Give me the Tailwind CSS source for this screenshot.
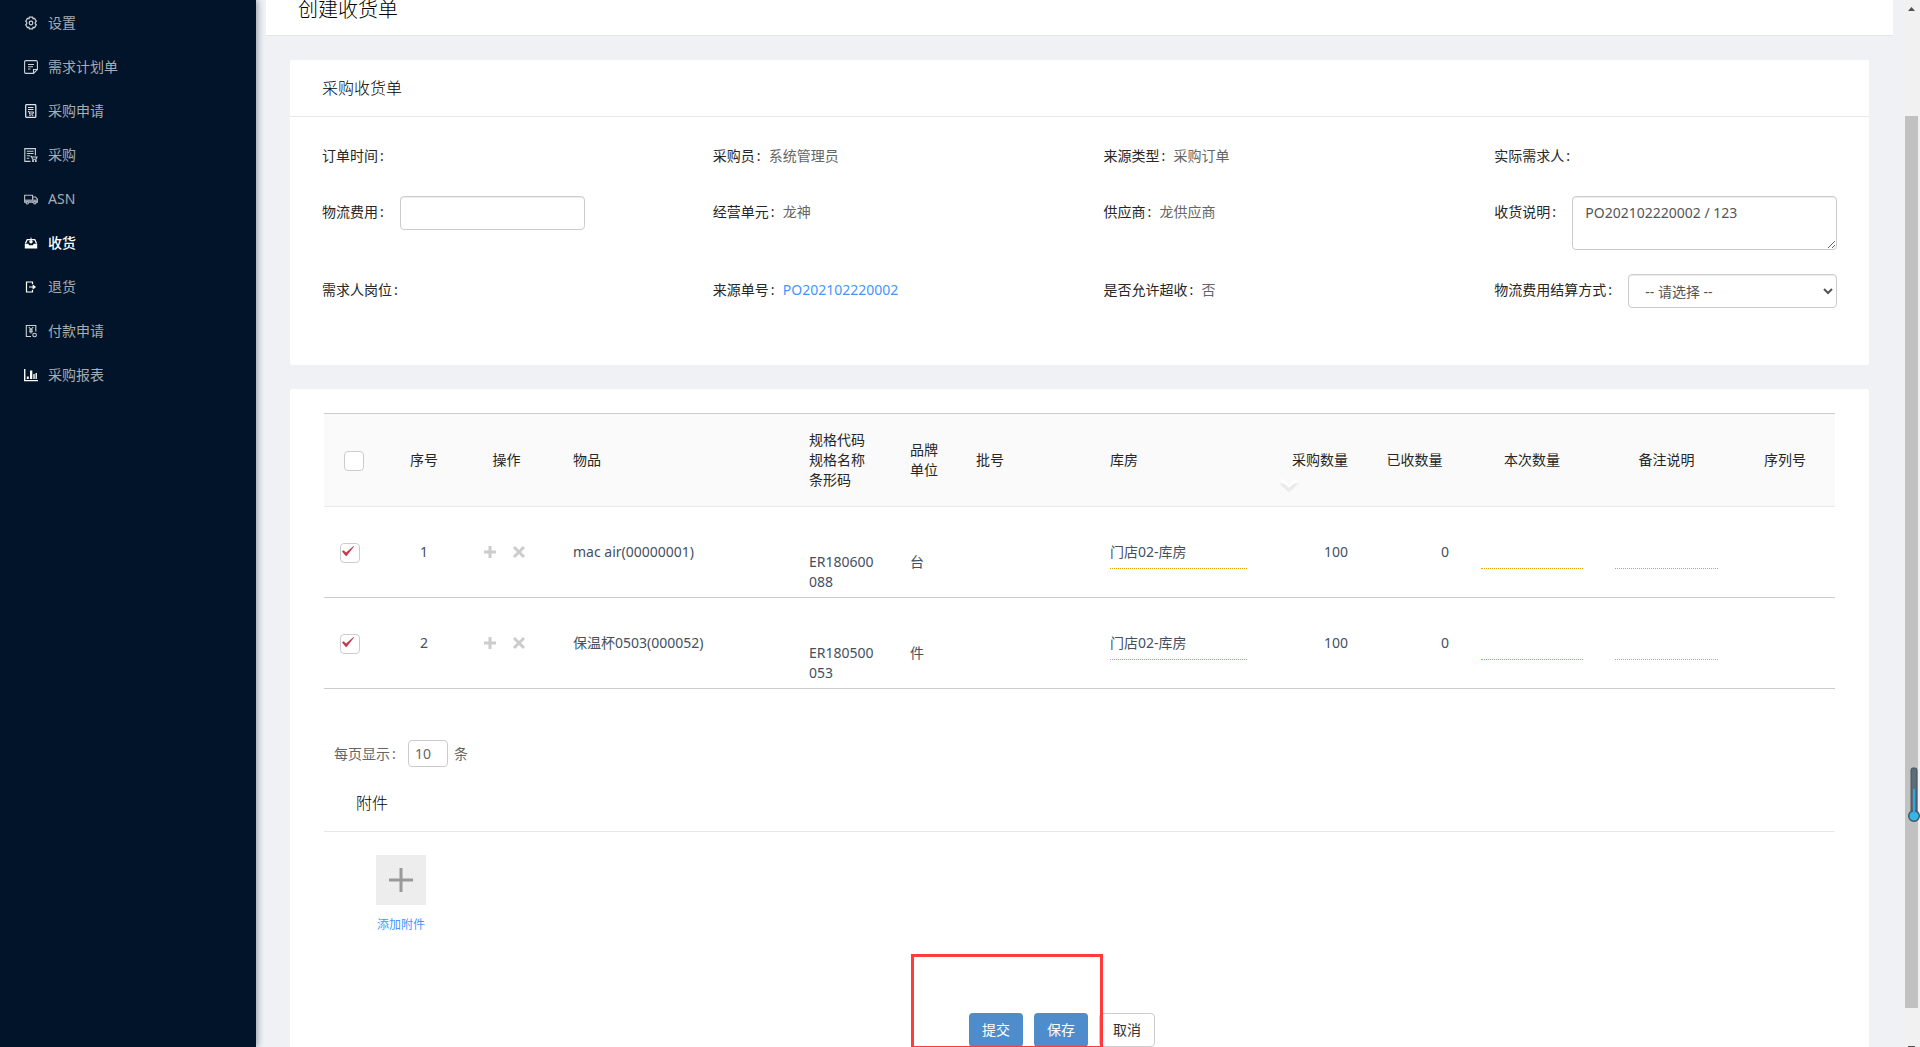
<!DOCTYPE html>
<html lang="zh-CN">
<head>
    <meta charset="UTF-8">
    <meta name="viewport" content="width=device-width, initial-scale=1.0">
    <title>创建收货单</title>

    <script src="https://cdn.jsdelivr.net/npm/@tailwindcss/browser@4"></script>

    <style>
        body {
            font-family: 'Noto Sans', 'Noto Sans CJK SC', sans-serif;
        }
    </style>
</head>
<body class="bg-[#f0f1f5] text-sm text-[#262626]">

    <div class="flex h-screen overflow-hidden">

        <!-- 侧边菜单 -->
        <aside class="relative z-10 w-64 shrink-0 bg-[#021429] pt-px shadow-[2px_0_6px_rgba(0,21,41,0.35)]">
            <nav class="text-[#a6adb4]">
                <a href="#" class="flex h-11 items-center gap-2.5 px-6">
                    <svg class="size-3.5" viewBox="0 0 14 14" fill="none" stroke="#cdd2d8" stroke-width="1.2"><path d="M5.4 1.2h3.2l.5 1.5 1.5-.3 1.7 2.7-1 1.2v1.4l1 1.2-1.7 2.7-1.5-.3-.5 1.5H5.4l-.5-1.500-1.500.3-1.700-2.700 1-1.200V6.300l-1-1.200 1.700-2.700 1.500.3z"/><circle cx="7" cy="7" r="1.800"/></svg>
                    <span>设置</span>
                </a>
                <a href="#" class="flex h-11 items-center gap-2.5 px-6">
                    <svg class="size-3.5" viewBox="0 0 14 14" fill="none" stroke="#cdd2d8" stroke-width="1.1"><path d="M2 .6h10q1.400 0 1.400 1.400v7.500L9.500 13.400H2Q.6 13.400.6 12V2Q.6.6 2 .6z"/><path d="M13.400 9.500H9.500v3.900M4 4.500h6M4 6.800h5M4 9h2.500"/></svg>
                    <span>需求计划单</span>
                </a>
                <a href="#" class="flex h-11 items-center gap-2.5 px-6">
                    <svg class="size-3.5" viewBox="0 0 14 14" fill="none" stroke="#dfe3e7" stroke-width="1"><rect x="1.700" y=".6" width="10.100" height="12.800" rx="1" stroke-width="1.300"/><path d="M4 3.500h5.500M4 5.500h5.500M4 7.500h1l.6 2.500h3.200l.7-2H5.400"/><circle cx="6" cy="11.300" r=".4"/><circle cx="8.600" cy="11.300" r=".4"/></svg>
                    <span>采购申请</span>
                </a>
                <a href="#" class="flex h-11 items-center gap-2.5 px-6">
                    <svg class="size-3.5" viewBox="0 0 14 14" fill="none" stroke="#cdd2d8" stroke-width="1.100"><path d="M6.500 13.400H.8V.6h10.600v7M2.800 3.200h6.800M2.800 5.500h6.800M2.800 7.800H6M2.800 10.200h2.500"/><path d="M6.300 8.300h1.200l1 2.900h3.600l.8-2.200H8"/><circle cx="9" cy="13" r=".5"/><circle cx="11.800" cy="13" r=".5"/></svg>
                    <span>采购</span>
                </a>
                <a href="#" class="flex h-11 items-center gap-2.5 px-6">
                    <svg class="size-3.5" viewBox="0 0 14 14" fill="none" stroke="#b9c0c8" stroke-width="1.100"><path d="M.6 3.200h8v7h-8z"/><path d="M8.600 5h3l1.900 2.300v2.900H8.600z"/><path d="M1 7.500h12.400v2.700H1z" fill="#8e97a1" stroke="none"/><circle cx="3.300" cy="10.800" r="1.200" fill="#021429"/><circle cx="10.800" cy="10.800" r="1.200" fill="#021429"/></svg>
                    <span>ASN</span>
                </a>
                <a href="#" class="flex h-11 items-center gap-2.5 px-6 font-medium text-white">
                    <svg class="size-3.5" viewBox="0 0 14 14" fill="white"><path d="M.8 7.800h3.400l1 1.500h3.600l1-1.500h3.400v4.700H.8z"/><path d="M1.400 7.500l1.800-3.800h7.600l1.800 3.800" fill="none" stroke="white" stroke-width="1.300"/><path d="M7 1.600v2" stroke="white"/><circle cx="7" cy="5.800" r="1.700"/></svg>
                    <span>收货</span>
                </a>
                <a href="#" class="flex h-11 items-center gap-2.5 px-6">
                    <svg class="size-3.5" viewBox="0 0 14 14" fill="none" stroke="white" stroke-width="1.200"><path d="M8.500 4V2H2.500v10h6v-2M5 7h5"/><path d="M8.600 4.200L12 7l-3.400 2.800z" fill="white" stroke="none"/></svg>
                    <span>退货</span>
                </a>
                <a href="#" class="flex h-11 items-center gap-2.5 px-6">
                    <svg class="size-3.5" viewBox="0 0 14 14" fill="none" stroke="#cdd2d8" stroke-width="1.100"><path d="M7 12.500H2.300V1.500h9.500v6"/><path d="M4.800 3l2.200 2.500L9.200 3M7 5.500v4M5 6h4M5 7.700h4"/><circle cx="10.600" cy="11" r="1.800"/></svg>
                    <span>付款申请</span>
                </a>
                <a href="#" class="flex h-11 items-center gap-2.5 px-6">
                    <svg class="size-3.5" viewBox="0 0 14 14" fill="white"><path d="M0 1h1.400v11H14v1.300H0zM2.800 8.500h2V11h-2zM6 2.500h2.300V11H6zM9.300 6h1.400v5H9.300zM11.500 5h1.400v6h-1.400z"/></svg>
                    <span>采购报表</span>
                </a>
            </nav>
        </aside>

        <!-- 主内容 -->
        <main class="min-w-0 flex-1 px-2.5">
            <header class="h-9 border-b border-[#e4e5e8] bg-white px-8">
                <h1 class="text-xl leading-5 font-light text-black">创建收货单</h1>
            </header>

            <div class="space-y-6 px-6 pt-6">

                <!-- 采购收货单信息 -->
                <section class="rounded-xs bg-white">
                    <h2 class="flex h-[57px] items-center border-b border-[#e8e8e8] px-8 text-base font-light text-black">采购收货单</h2>
                    <form class="grid grid-cols-4 gap-x-12 gap-y-6 px-8 pt-[23px] pb-[57px] leading-8">
                        <div class="flex"><span>订单时间</span><span class="w-3.5 pl-0.5">:</span></div>
                        <div class="flex"><span>采购员</span><span class="w-3.5 pl-0.5">:</span><span class="text-[#666]">系统管理员</span></div>
                        <div class="flex"><span>来源类型</span><span class="w-3.5 pl-0.5">:</span><span class="text-[#666]">采购订单</span></div>
                        <div class="flex"><span>实际需求人</span><span class="w-3.5 pl-0.5">:</span></div>

                        <div class="flex items-start">
                            <label for="freight" class="flex shrink-0">物流费用<span class="w-3.5 pl-0.5">:</span></label>
                            <input id="freight" type="text" class="ml-2 h-[34px] w-[185px] rounded border border-[#ccc] px-3 shadow-[inset_0_1px_1px_rgba(0,0,0,0.075)]">
                        </div>
                        <div class="flex"><span>经营单元</span><span class="w-3.5 pl-0.5">:</span><span class="text-[#666]">龙神</span></div>
                        <div class="flex"><span>供应商</span><span class="w-3.5 pl-0.5">:</span><span class="text-[#666]">龙供应商</span></div>
                        <div class="flex items-start">
                            <label for="note" class="flex shrink-0">收货说明<span class="w-3.5 pl-0.5">:</span></label>
                            <textarea id="note" class="ml-2 h-[54px] min-w-0 flex-1 rounded border border-[#ccc] px-3 py-1.5 leading-5 text-[#555] shadow-[inset_0_1px_1px_rgba(0,0,0,0.075)]">PO202102220002 / 123</textarea>
                        </div>

                        <div class="flex"><span>需求人岗位</span><span class="w-3.5 pl-0.5">:</span></div>
                        <div class="flex"><span>来源单号</span><span class="w-3.5 pl-0.5">:</span><a href="#" class="text-[#4695ff]">PO202102220002</a></div>
                        <div class="flex"><span>是否允许超收</span><span class="w-3.5 pl-0.5">:</span><span class="text-[#666]">否</span></div>
                        <div class="flex items-start">
                            <label for="settle" class="flex shrink-0">物流费用结算方式<span class="w-3.5 pl-0.5">:</span></label>
                            <select id="settle" class="ml-2 h-[34px] min-w-0 flex-1 rounded border border-[#ccc] bg-white pl-3 leading-5 text-[#555] shadow-[inset_0_1px_1px_rgba(0,0,0,0.075)]">
                                <option>-- 请选择 --</option>
                            </select>
                        </div>
                    </form>
                </section>

                <!-- 物品明细 -->
                <section class="rounded-xs bg-white px-[34px] pt-6 pb-10">
                    <table class="w-full table-fixed border-collapse text-left leading-5">
                        <colgroup>
                            <col class="w-[60px]">
                            <col class="w-[80px]">
                            <col class="w-[85px]">
                            <col>
                            <col class="w-[101px]">
                            <col class="w-[66px]">
                            <col class="w-[134px]">
                            <col class="w-[153px]">
                            <col class="w-[101px]">
                            <col class="w-[117px]">
                            <col class="w-[118px]">
                            <col class="w-[151px]">
                            <col class="w-[93px]">
                        </colgroup>
                        <thead>
                            <tr class="h-[93px] border-t border-b border-t-[#ccc] border-b-[#e8e8e8] bg-[#fafafa]">
                                <th class="pt-0.5"><input type="checkbox" aria-label="全选" class="mx-auto block size-5 appearance-none rounded border border-[#ccc] bg-white"></th>
                                <th class="text-center font-normal">序号</th>
                                <th class="text-center font-normal">操作</th>
                                <th class="pl-6 font-normal">物品</th>
                                <th class="px-2 font-normal">规格代码<br>规格名称<br>条形码</th>
                                <th class="px-2 font-normal">品牌<br>单位</th>
                                <th class="px-2 font-normal">批号</th>
                                <th class="px-2 font-normal">库房</th>
                                <th class="relative px-2 text-right font-normal">
                                    采购数量
                                    <svg class="absolute top-[65px] left-6 h-3.5 w-5" viewBox="0 0 20 14"><path d="M0 4.500h20l-10 9z" fill="#ebebeb"/><path d="M2 0l8 7 8-7" fill="none" stroke="white" stroke-width="2.500"/></svg>
                                </th>
                                <th class="text-center font-normal">已收数量</th>
                                <th class="text-center font-normal">本次数量</th>
                                <th class="text-center font-normal">备注说明</th>
                                <th class="pl-[22px] font-normal">序列号</th>
                            </tr>
                        </thead>
                        <tbody class="text-[#44505f]">
                            <tr class="h-[91px] border-b border-[#ccc]">
                                <td class="pt-0.5">
                                    <div class="relative ml-4 size-5">
                                        <input type="checkbox" checked aria-label="选择第1行" class="block size-5 appearance-none rounded border border-[#ccc] bg-white">
                                        <svg class="pointer-events-none absolute top-[3px] left-0.5 h-2.5 w-3" viewBox="0 0 12 10" fill="#c53a4b"><path d="M0 5.500l1.500-1.200 2.600 2.200L11.500 0 12 .6 4.600 10H3.800z"/></svg>
                                    </div>
                                </td>
                                <td class="text-center">1</td>
                                <td>
                                    <div class="flex justify-center gap-[15px] pr-1 pb-px text-[#ccc]">
                                        <button type="button" aria-label="添加"><svg class="size-3.5" viewBox="0 0 14 14" stroke="currentColor" stroke-width="3"><path d="M7 1v12M1 7h12"/></svg></button>
                                        <button type="button" aria-label="删除"><svg class="size-3.5" viewBox="0 0 14 14" stroke="currentColor" stroke-width="3"><path d="M2 2l10 10M12 2L2 12"/></svg></button>
                                    </div>
                                </td>
                                <td class="pl-6">mac air(00000001)</td>
                                <td class="pt-10 pr-6 pl-2 break-all">ER180600088</td>
                                <td class="px-2 pt-5">台</td>
                                <td></td>
                                <td class="px-2"><input type="text" value="门店02-库房" aria-label="库房" class="block h-[34px] w-full border-b border-dotted border-[#e8a40c] pb-0.5"></td>
                                <td class="pr-2 text-right">100</td>
                                <td class="pr-6 text-right">0</td>
                                <td class="px-2"><input type="text" aria-label="本次数量" class="block h-[34px] w-full border-b border-dotted border-[#e8a40c]"></td>
                                <td class="px-6"><input type="text" aria-label="备注说明" class="block h-[34px] w-full border-b border-dotted border-[#e8a40c]"></td>
                                <td></td>
                            </tr>
                            <tr class="h-[91px] border-b border-[#ccc]">
                                <td class="pt-0.5">
                                    <div class="relative ml-4 size-5">
                                        <input type="checkbox" checked aria-label="选择第2行" class="block size-5 appearance-none rounded border border-[#ccc] bg-white">
                                        <svg class="pointer-events-none absolute top-[3px] left-0.5 h-2.5 w-3" viewBox="0 0 12 10" fill="#c53a4b"><path d="M0 5.500l1.500-1.200 2.600 2.200L11.500 0 12 .6 4.600 10H3.800z"/></svg>
                                    </div>
                                </td>
                                <td class="text-center">2</td>
                                <td>
                                    <div class="flex justify-center gap-[15px] pr-1 pb-px text-[#ccc]">
                                        <button type="button" aria-label="添加"><svg class="size-3.5" viewBox="0 0 14 14" stroke="currentColor" stroke-width="3"><path d="M7 1v12M1 7h12"/></svg></button>
                                        <button type="button" aria-label="删除"><svg class="size-3.5" viewBox="0 0 14 14" stroke="currentColor" stroke-width="3"><path d="M2 2l10 10M12 2L2 12"/></svg></button>
                                    </div>
                                </td>
                                <td class="pl-6">保温杯0503(000052)</td>
                                <td class="pt-10 pr-6 pl-2 break-all">ER180500053</td>
                                <td class="px-2 pt-5">件</td>
                                <td></td>
                                <td class="px-2"><input type="text" value="门店02-库房" aria-label="库房" class="block h-[34px] w-full border-b border-dotted border-[#e8a40c] pb-0.5"></td>
                                <td class="pr-2 text-right">100</td>
                                <td class="pr-6 text-right">0</td>
                                <td class="px-2"><input type="text" aria-label="本次数量" class="block h-[34px] w-full border-b border-dotted border-[#e8a40c]"></td>
                                <td class="px-6"><input type="text" aria-label="备注说明" class="block h-[34px] w-full border-b border-dotted border-[#e8a40c]"></td>
                                <td></td>
                            </tr>
                        </tbody>
                    </table>

                    <!-- 分页 -->
                    <div class="mt-[51px] flex h-[27px] items-center px-2.5 text-[#666]">
                        <label for="page-size" class="flex">每页显示<span class="w-3.5 pl-0.5">:</span></label>
                        <input id="page-size" type="text" value="10" class="ml-1 h-[27px] w-10 rounded border border-[#ccc] px-1.5">
                        <span class="ml-1.5">条</span>
                    </div>

                    <!-- 附件 -->
                    <h2 class="mt-2 flex h-[57px] items-center border-b border-[#e8e8e8] px-8 text-base font-light text-black">附件</h2>
                    <button type="button" class="mt-[23px] ml-[51px] flex w-[52px] flex-col items-center gap-[11px] text-xs leading-[18px] text-[#4695ff]">
                        <span class="flex size-[50px] items-center justify-center bg-[#ededed]">
                            <svg class="size-6" viewBox="0 0 24 24" stroke="#999" stroke-width="3"><path d="M12 0v24M0 12h24"/></svg>
                        </span>
                        添加附件
                    </button>

                    <!-- 操作按钮 -->
                    <div class="mt-[79px] flex justify-center pr-[35px]">
                        <div class="relative flex gap-[11px]">
                            <button type="button" class="h-[34px] w-[54px] rounded bg-[#4f8ccb] text-white">提交</button>
                            <button type="button" class="h-[34px] w-[54px] rounded bg-[#4f8ccb] text-white">保存</button>
                            <button type="button" class="h-[34px] w-14 rounded border border-[#ccc] bg-white text-[#333]">取消</button>
                            <div class="pointer-events-none absolute -top-[59px] -left-[58px] h-[95px] w-48 border-3 border-[#ff3b3b]"></div>
                        </div>
                    </div>
                </section>
            </div>
        </main>

        <!-- 滚动条 -->
        <div class="relative flex w-[17px] shrink-0 flex-col items-center bg-[#f1f1f1]">
            <svg class="mt-[7px] h-1 w-[7px]" viewBox="0 0 7 4"><path d="M0 4L3.500 0 7 4z" fill="#505050"/></svg>
            <div class="mt-[105px] mb-[38px] w-[13px] flex-1 bg-[#c1c1c1]"></div>
            <div class="h-px w-[7px] bg-[#505050]"></div>
            <svg class="absolute top-[767px] right-0 h-14 w-3" viewBox="0 0 12 56"><rect x="3" y="1" width="6" height="46" rx="2" fill="#5d6d78" stroke="#44525e"/><circle cx="6" cy="49" r="5.300" fill="#35b6e6" stroke="#44525e" stroke-width="1.400"/><path d="M5 22h2v24H5z" fill="#2fa8ea"/></svg>
        </div>
    </div>
</body>
</html>
